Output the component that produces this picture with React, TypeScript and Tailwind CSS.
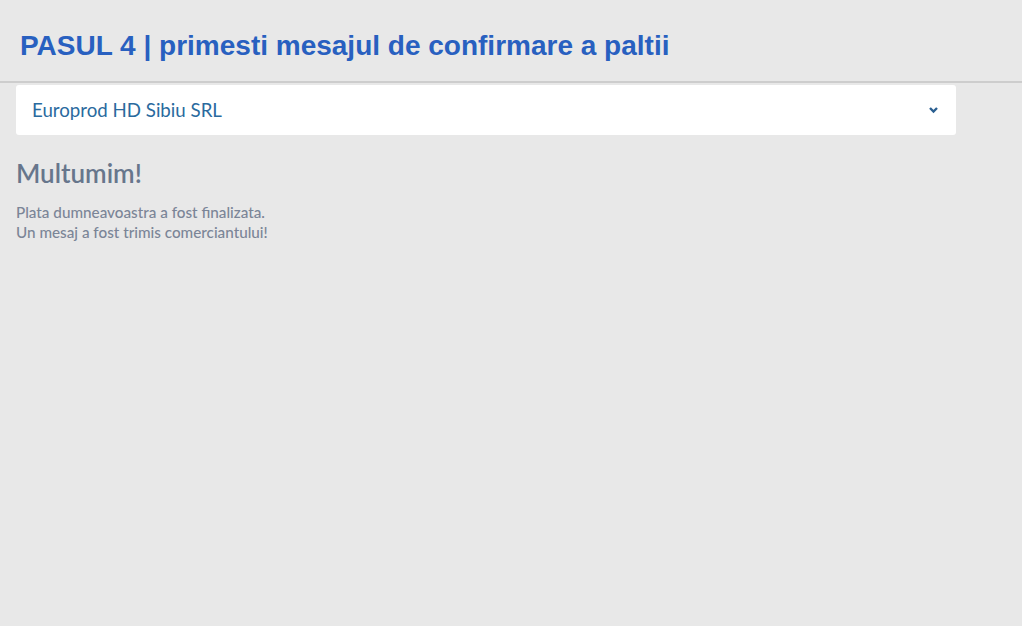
export default function App() {
  return (
    <div className="min-h-[626px] w-full bg-[#e8e8e8]">
      <div className="h-[83px] border-b-2 border-[#cdcdcd] flex items-center pl-[20px] pt-[11px]">
        <h1 className="text-[28px] leading-[32px] font-bold text-[#2860c0] font-['Liberation_Sans',Arial,sans-serif]">
          PASUL 4 | primesti mesajul de confirmare a paltii
        </h1>
      </div>
      <div className="px-[16px] w-[972px]">
        <div className="mt-[2px] h-[50px] bg-white rounded-[3px] flex items-center justify-between pl-[16px] pr-[17px]">
          <span className="text-[18.7px] text-[#2a6a9e] font-['Lato',sans-serif]">Europrod HD Sibiu SRL</span>
          <svg width="11" height="8" viewBox="0 0 11 8">
            <path d="M2 2 L5.5 5.5 L9 2" stroke="#2a5f91" strokeWidth="2.4" fill="none" />
          </svg>
        </div>
        <h2 className="mt-[21px] text-[26px] leading-[34px] font-semibold text-[#67768c] font-['Lato',sans-serif]">Multumim!</h2>
        <p className="mt-[12px] text-[15.25px] leading-[20px] font-medium text-[#7b8597] font-['Lato',sans-serif]">
          Plata dumneavoastra a fost finalizata.
          <br />
          Un mesaj a fost trimis comerciantului!
        </p>
      </div>
    </div>
  );
}
